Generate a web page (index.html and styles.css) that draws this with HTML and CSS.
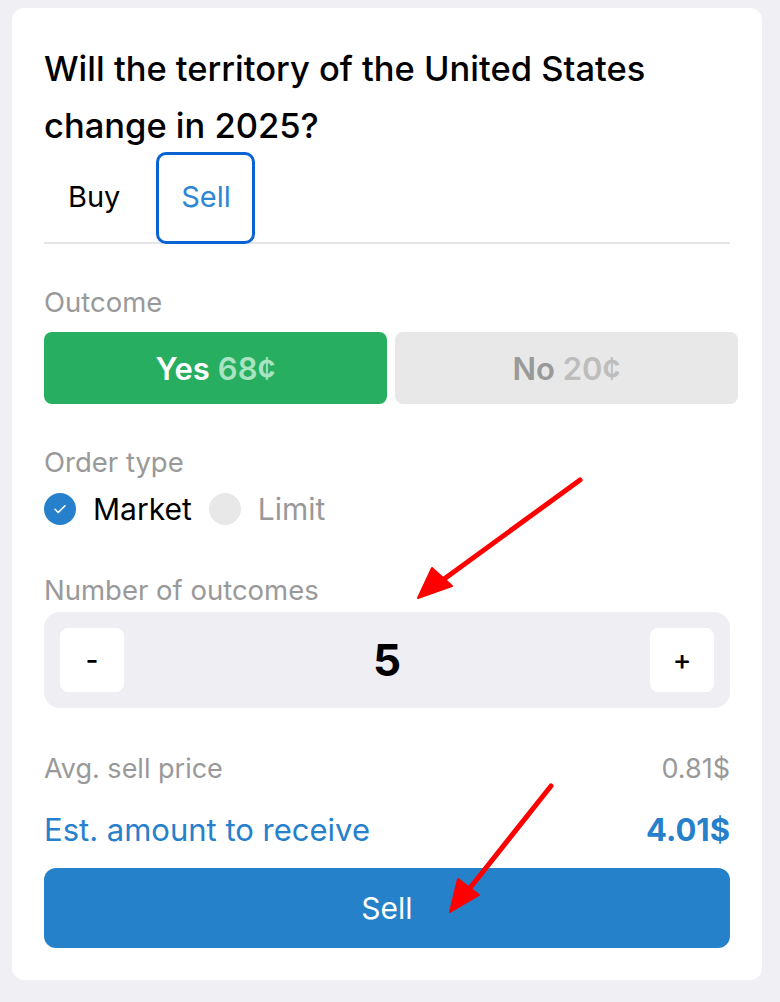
FILE: index.html
```html
<!DOCTYPE html>
<html lang="en">
<head>
    <meta charset="UTF-8">
    <meta name="viewport" content="width=device-width, initial-scale=1.0">
    <title>Trade</title>
    <link rel="stylesheet" href="styles.css">
</head>
<body>
    <div class="card">
        <h1 class="question">Will the territory of the United States change in 2025?</h1>

        <div class="tabs">
            <div class="tab">Buy</div>
            <div class="tab active">Sell</div>
        </div>

        <div class="label">Outcome</div>
        <div class="outcomes">
            <div class="outcome yes selected">Yes <span class="price">68¢</span></div>
            <div class="outcome no">No <span class="price">20¢</span></div>
        </div>

        <div class="label">Order type</div>
        <div class="order-types">
            <div class="radio checked">
                <span class="dot">
                    <svg width="16" height="16" viewBox="0 0 16 16"><path d="M3 8.3l3.2 3.2L13 4.8" fill="none" stroke="#fff" stroke-width="1.6" stroke-linecap="round" stroke-linejoin="round"/></svg>
                </span>
                Market
            </div>
            <div class="radio">
                <span class="dot"></span>
                Limit
            </div>
        </div>

        <div class="label">Number of outcomes</div>
        <div class="stepper">
            <button class="step">-</button>
            <div class="count">5</div>
            <button class="step">+</button>
        </div>

        <div class="summary">
            <div class="row muted"><span>Avg. sell price</span><span>0.81$</span></div>
            <div class="row total"><span>Est. amount to receive</span><strong>4.01$</strong></div>
        </div>

        <button class="submit">Sell</button>
    </div>

    <svg class="arrows" width="780" height="1002" viewBox="0 0 780 1002">
        <g stroke="#ff0000" stroke-width="5" stroke-linecap="round" fill="#ff0000">
            <line x1="580" y1="480" x2="440" y2="582"/>
            <polygon points="418,598 432,568 452,586" stroke-width="2" stroke-linejoin="round"/>
            <line x1="551" y1="786" x2="466" y2="893"/>
            <polygon points="450,912 458,879 479,895" stroke-width="2" stroke-linejoin="round"/>
        </g>
    </svg>
</body>
</html>
```

FILE: styles.css
```css
body {
    margin: 0;
    background: #efeff4;
    font-family: Inter, "Noto Sans", sans-serif;
    color: #000;
    padding: 8px 18px 0 12px;
    position: relative;
}
.card {
    background: #fff;
    border-radius: 12px;
    padding: 32px;
    width: 686px;
}
.question {
    font-size: 34.5px;
    font-weight: 500;
    line-height: 57px;
    margin: 0;
}
.tabs {
    display: flex;
    align-items: flex-start;
    gap: 12px;
    border-bottom: 2px solid #e5e5ea;
    height: 90px;
    margin-top: -2px;
    margin-bottom: 41px;
}
.tab {
    font-size: 29px;
    padding: 0 21px 4px;
    height: 92px;
    display: flex;
    align-items: center;
    box-sizing: border-box;
    border: 3px solid transparent;
    border-radius: 10px;
}
.tab.active {
    color: #2d87d3;
    border-color: #0a63d2;
    width: 99px;
    padding: 0 0 4px;
    justify-content: center;
}
.label {
    font-size: 27.5px;
    color: #999;
    line-height: 34px;
    margin-bottom: 13px;
}
.outcomes {
    display: flex;
    gap: 8px;
    margin-right: -8px;
    margin-bottom: 41px;
}
.outcome {
    flex: 1;
    height: 72px;
    border-radius: 8px;
    display: flex;
    align-items: center;
    justify-content: center;
    font-size: 31px;
    font-weight: 600;
    gap: 8px;
}
.yes { background: #27ae60; color: #fff; }
.yes .price { color: #a9e4c2; }
.no { background: #e8e8e8; color: #999; }
.no .price { color: #bdbdbd; }
.order-types {
    display: flex;
    gap: 17px;
    margin-bottom: 47px;
}
.radio {
    display: flex;
    align-items: center;
    gap: 17px;
    font-size: 30px;
    color: #999;
    height: 34px;
}
.radio.checked { color: #000; }
.dot {
    width: 32px;
    height: 32px;
    border-radius: 50%;
    background: #e8e8e8;
    display: flex;
    align-items: center;
    justify-content: center;
}
.checked .dot { background: #2680cc; }
.stepper {
    background: #eeeef3;
    border-radius: 16px;
    height: 96px;
    display: flex;
    align-items: center;
    justify-content: space-between;
    padding: 0 16px;
    box-sizing: border-box;
    margin-top: -8px;
    margin-bottom: 43px;
}
.step {
    width: 64px;
    height: 64px;
    border: none;
    border-radius: 8px;
    background: #fff;
    font-family: Inter, sans-serif;
    font-size: 28px;
    font-weight: 500;
    color: #000;
    padding: 0;
}
.count {
    font-size: 44px;
    font-weight: 700;
}
.row {
    display: flex;
    justify-content: space-between;
    align-items: center;
}
.muted {
    font-size: 27px;
    color: #999;
    height: 34px;
    margin-bottom: 24px;
}
.total {
    font-size: 31px;
    color: #2680cc;
    height: 40px;
}
.total strong { font-weight: 700; }
.submit {
    display: block;
    width: 100%;
    height: 80px;
    margin-top: 19px;
    border: none;
    border-radius: 12px;
    background: #2581ca;
    color: #fff;
    font-family: Inter, sans-serif;
    font-size: 30px;
}
.arrows {
    position: absolute;
    top: 0;
    left: 0;
    pointer-events: none;
}
```
